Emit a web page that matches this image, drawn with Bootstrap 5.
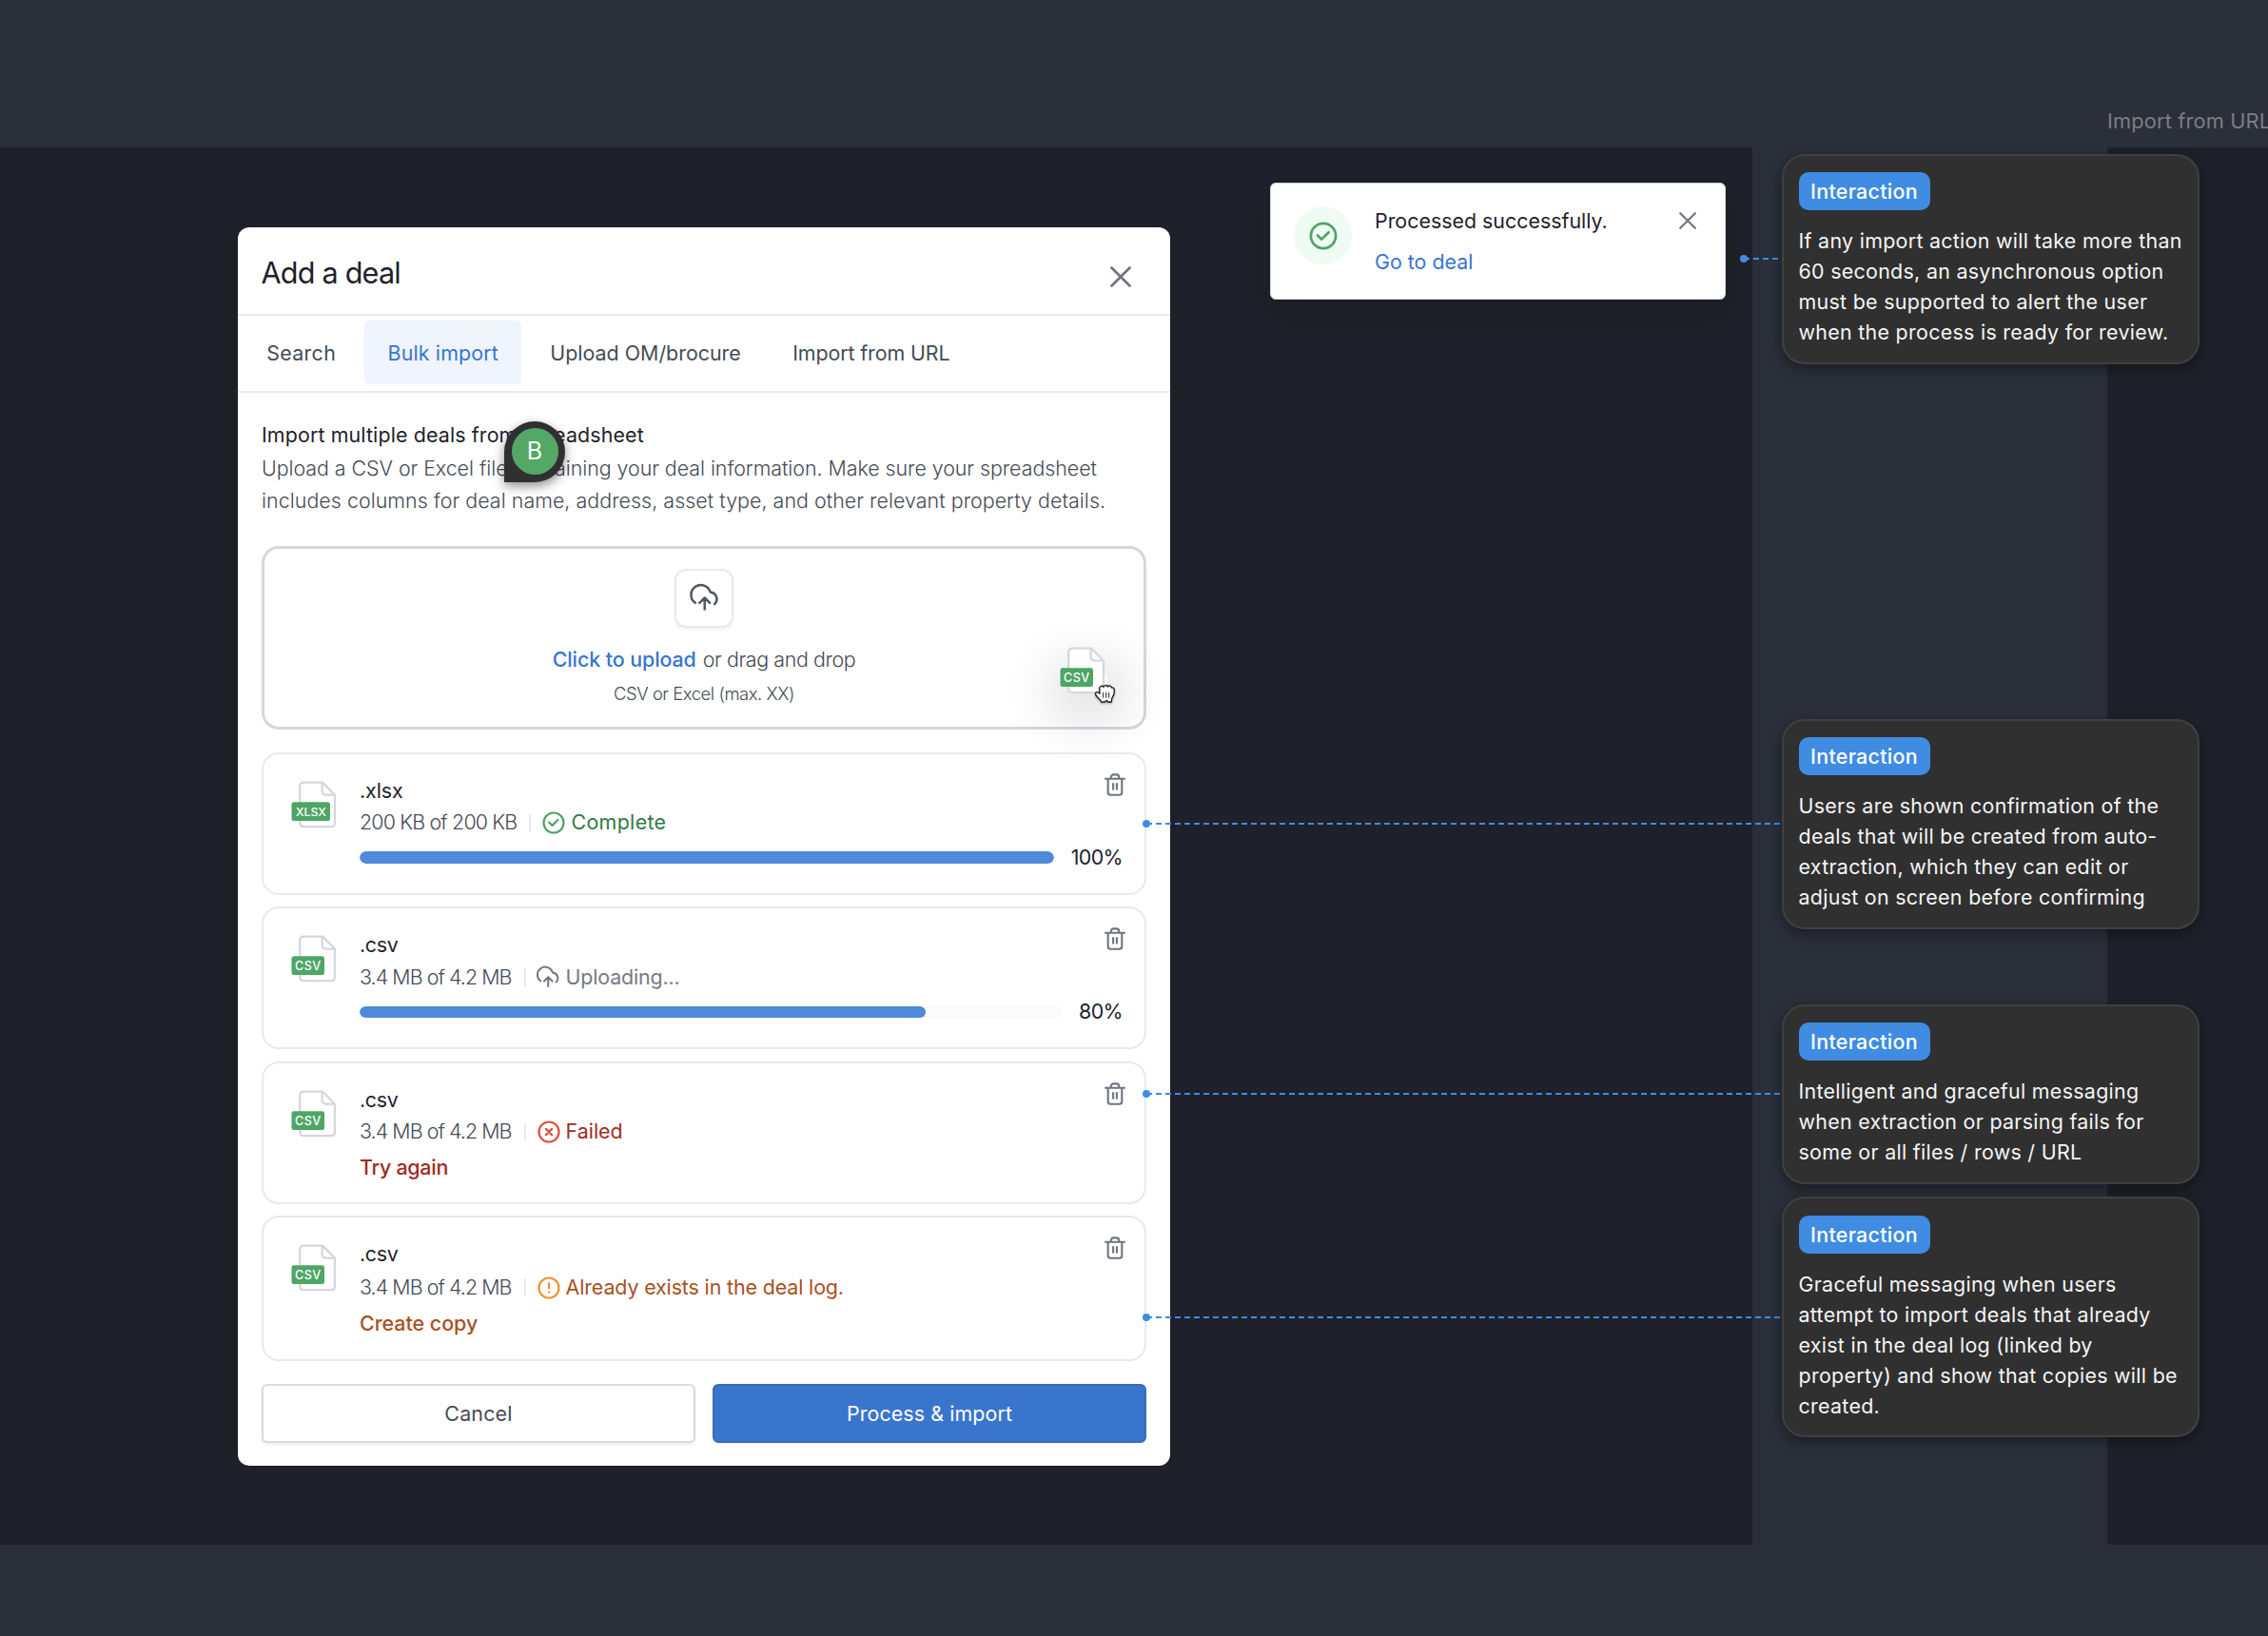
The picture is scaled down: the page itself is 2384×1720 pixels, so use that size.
<!DOCTYPE html>
<html lang="en">
<head>
<meta charset="utf-8">
<meta name="viewport" content="width=device-width, initial-scale=1">
<title>Add a deal</title>
<link href="https://cdn.jsdelivr.net/npm/bootstrap@5.3.0/dist/css/bootstrap.min.css" rel="stylesheet">
<style>
  :root { --ink:#1e222b; --slate:#464b56; --grey:#6f7580; --blue:#3875cf; --line:#e8e9ef; }
  body { background:#2b2f3a; font-family:Inter,"Liberation Sans",sans-serif; font-size:21.4px; line-height:33.6px; color:var(--ink); }
  a { text-decoration:none; }
  svg { display:block; flex:none; }
  .board { width:2384px; height:1720px; }
  .artboard { background:#1e2129; top:155px; height:1469px; }
  .artboard-a { left:0; width:1842px; }
  .artboard-b { left:2215px; width:169px; }
  .artboard-title { left:2215px; top:111px; font-size:21.8px; letter-spacing:.15px; color:#7b7e85; }

  .deal-modal { left:250px; top:239px; width:980px; height:1302px; border-radius:12px; }
  .modal-top { height:93px; padding:5px 41px 0 24.5px; border-bottom:2px solid var(--line); }
  .modal-top h1 { font-size:30.6px; font-weight:400; letter-spacing:-.8px; line-height:40px; }
  .tabs { height:81px; padding:5px 6px 0; gap:5.8px; border-bottom:2px solid #e9eaec; }
  .tabs .nav-link { height:67px; padding:0 24.3px; line-height:68.5px; color:var(--slate); border-radius:5px; }
  .tabs .nav-link.active { background:#eff4fd; color:var(--blue); }
  .modal-main { padding:28px 25px 0; }
  .intro { color:var(--slate); font-weight:350; }

  .dropzone { height:193px; margin-top:30.5px; border:3px solid #d5d7dc; border-radius:18px; padding-top:21px; }
  .upload-tile { width:62px; height:62px; border:2px solid var(--line); border-radius:12px; box-shadow:0 2px 3px rgba(30,34,43,.06); }
  .dragged { left:836px; top:103.5px; }
  .drag-shade { left:846px; top:128px; width:40px; height:20px; border-radius:20px; box-shadow:0 12px 54px 20px rgba(0,0,0,.14); }
  .grab { left:871.5px; top:142.5px; filter:drop-shadow(0 1px 1px rgba(0,0,0,.35)); }

  .file-list { margin-top:24px; gap:12.5px; }
  .file-card { height:150px; border:2px solid var(--line); border-radius:18px; padding:20px 23px 0 29px; }
  .file-card.tall { height:153px; }
  .file-body { padding:2px 0 0 24px; }
  .file-info { line-height:33.5px; }
  .size-text { color:var(--slate); font-weight:350; letter-spacing:-.92px; }
  .sep { width:2px; height:19px; background:var(--line); margin:0 12px 0 13px; }
  .track { height:12.5px; border-radius:7px; background:#fbfbfd; }
  .track .progress-bar { border-radius:7px; background:#4f89da; }
  .pct { letter-spacing:-.6px; margin-left:18px; }
  .file-action { font-weight:500; line-height:34px; }
  .trash { margin:-2px -4px 0 0; }
  .t-done { color:#2f7a46; }
  .t-fail { color:#9e2c22; }
  .t-warn { color:#a9501f; }

  .foot { margin-top:24px; gap:18px; }
  .foot .btn { height:62px; border-radius:6px; font-size:21.4px; border-width:2px; }
  .btn-cancel { border-color:#d9dadf; color:var(--slate); background:#fff; box-shadow:0 2px 3px rgba(30,34,43,.08); }
  .btn-process { background:#3a75cd; border-color:#386cba; color:#fff; }

  .toast-card { left:1335px; top:192px; width:479px; height:122.5px; border-radius:6px; border:1px solid #d0d3da; padding:24px 38px 0 24px; box-shadow:0 16px 30px rgba(0,0,0,.12); }
  .ok-disc { width:61px; height:61px; background:#effbf3; }

  .note { left:1873px; width:439px; background:#303030; border:2px solid #404040; border-radius:24px; padding:17.5px 12px 0 15.5px; color:#f5f5f5; letter-spacing:.3px; line-height:32px; box-shadow:0 5px 14px rgba(0,0,0,.4); }
  .note .tag { display:block; width:138px; height:40px; line-height:41px; text-align:center; background:#3f8ce2; color:#fff; font-weight:550; border-radius:10px; margin-bottom:16px; }
  .note p { margin:0; white-space:nowrap; }

  .link-line { height:2px; background:repeating-linear-gradient(90deg,#3f8ce2 0 6px,transparent 6px 10px); }
  .link-line::before { content:""; position:absolute; left:-4px; top:-3px; width:8px; height:8px; border-radius:50%; background:#3f8ce2; }

  .pin { left:530px; top:442.5px; width:64px; height:64px; background:#303030; border-radius:50% 50% 50% 0; box-shadow:0 4px 12px rgba(0,0,0,.45); }
  .pin span { width:49px; height:49px; background:#53a866; color:#fff; font-size:25px; }
</style>
</head>
<body>
<svg width="0" height="0" class="position-absolute">
  <defs>
    <symbol id="page" viewBox="0 0 48 50">
      <path d="M12.2 1.7H33.2L46 14.6V44.6a3.6 3.6 0 0 1-3.6 3.6H12.8a3.6 3.6 0 0 1-3.6-3.6V5.3a3.6 3.6 0 0 1 3.6-3.6Z" fill="#fff" stroke="#d5d7db" stroke-width="2.3"/>
      <path d="M32.6 1.9V11a3.6 3.6 0 0 0 3.6 3.6H46" fill="none" stroke="#d5d7db" stroke-width="2.3"/>
    </symbol>
    <symbol id="csv" viewBox="0 0 48 50">
      <use href="#page" width="48" height="50"/>
      <rect x=".5" y="22.2" width="34.5" height="19.8" rx="2.5" fill="#4ea566"/>
      <text x="17.9" y="36.9" text-anchor="middle" font-size="12.6" font-weight="550" letter-spacing=".5" fill="#fff">CSV</text>
    </symbol>
    <symbol id="xlsx" viewBox="0 0 48 50">
      <use href="#page" width="48" height="50"/>
      <rect x=".5" y="22.2" width="40.5" height="19.8" rx="2.5" fill="#4ea566"/>
      <text x="20.9" y="36.8" text-anchor="middle" font-size="12.2" font-weight="550" fill="#fff">XLSX</text>
    </symbol>
    <symbol id="cloud" viewBox="0 0 34 32">
      <path d="M6.8 20.8A10.3 10.3 0 1 1 22.6 9.4 7.5 7.5 0 0 1 27.2 22.2M16.7 27.6V15.6M11.3 20.8l5.4-5.3 5.4 5.3" fill="none" stroke="currentColor" stroke-width="2.5" stroke-linecap="round" stroke-linejoin="round"/>
    </symbol>
    <symbol id="check" viewBox="0 0 24 24">
      <circle cx="12" cy="12" r="10.5" fill="none" stroke="currentColor" stroke-width="2.2"/>
      <path d="M7.2 11.6l3.3 3.3 6-5.9" fill="none" stroke="currentColor" stroke-width="2.2" stroke-linecap="round" stroke-linejoin="round"/>
    </symbol>
    <symbol id="cross" viewBox="0 0 22 22">
      <path d="M1.5 1.5l19 19M20.5 1.5l-19 19" fill="none" stroke="currentColor" stroke-width="2.7" stroke-linecap="round"/>
    </symbol>
    <symbol id="bin" viewBox="0 0 24 24">
      <path d="M2 5.7h20M4.7 5.7V20a2.8 2.8 0 0 0 2.8 2.8h9A2.8 2.8 0 0 0 19.3 20V5.7M7.8 5.5V4a2.6 2.6 0 0 1 2.6-2.6h3.2A2.6 2.6 0 0 1 16.2 4v1.5M10.1 11v5.8M13.9 11v5.8" fill="none" stroke="currentColor" stroke-width="2.1" stroke-linecap="round" stroke-linejoin="round"/>
    </symbol>
  </defs>
</svg>

<main class="board position-relative overflow-hidden">
  <div class="artboard artboard-a position-absolute"></div>
  <div class="artboard artboard-b position-absolute"></div>
  <div class="artboard-title position-absolute text-nowrap">Import from URL</div>

  <section class="deal-modal position-absolute bg-white">
    <header class="modal-top d-flex align-items-center justify-content-between">
      <h1 class="m-0">Add a deal</h1>
      <svg width="22" height="22" class="mt-2" style="color:#6f7580"><use href="#cross"/></svg>
    </header>
    <nav class="tabs nav flex-nowrap">
      <a class="nav-link" href="#" style="letter-spacing:.3px">Search</a>
      <a class="nav-link active" href="#" style="letter-spacing:.15px">Bulk import</a>
      <a class="nav-link" href="#">Upload OM/brocure</a>
      <a class="nav-link" href="#" style="letter-spacing:-.1px">Import from URL</a>
    </nav>
    <div class="modal-main">
      <div style="letter-spacing:.13px">Import multiple deals from spreadsheet</div>
      <div class="intro text-nowrap">
        <div style="letter-spacing:-.04px; padding-top:1.5px">Upload a CSV or Excel file containing your deal information. Make sure your spreadsheet</div>
        <div style="letter-spacing:.05px">includes columns for deal name, address, asset type, and other relevant property details.</div>
      </div>

      <div class="dropzone position-relative d-flex flex-column align-items-center">
        <div class="upload-tile d-flex align-items-center justify-content-center bg-white">
          <svg width="34" height="32" style="color:#50555f; margin:1px 0 0 1px"><use href="#cloud"/></svg>
        </div>
        <div class="d-flex" style="margin-top:17px; gap:7px">
          <a href="#" style="color:var(--blue); font-weight:550; letter-spacing:-.07px">Click to upload</a>
          <span style="color:var(--slate); font-weight:350; letter-spacing:-.38px">or drag and drop</span>
        </div>
        <div style="color:var(--slate); font-weight:350; font-size:18.4px; letter-spacing:-.43px; margin-top:3px">CSV or Excel (max. XX)</div>
        <div class="drag-shade position-absolute"></div>
        <svg class="dragged position-absolute" width="48" height="50"><use href="#csv"/></svg>
        <svg class="grab position-absolute" width="22" height="20" viewBox="0 0 66 60">
          <path d="M22 55C18 46 8 42 5 34C3 27 9 24 14 28L18 31L17 14C18 6 27 5 30 10C33 3 41 3 43 9C47 4 54 6 55 12C60 11 65 14 64 22C64 34 61 40 56 46L55 57L44 57L40 52L34 57L23 57Z" fill="#fff" stroke="#222" stroke-width="4" stroke-linejoin="round"/>
          <path d="M29 27V44M38 27V44M47 27V44" stroke="#222" stroke-width="3"/>
        </svg>
      </div>

      <div class="file-list d-flex flex-column">
        <article class="file-card position-relative d-flex align-items-start">
          <svg width="48" height="50" class="mt-2"><use href="#xlsx"/></svg>
          <div class="file-body flex-grow-1">
            <div class="d-flex justify-content-between">
              <div class="file-info">
                <div style="letter-spacing:-.1px">.xlsx</div>
                <div class="d-flex align-items-center"><span class="size-text" style="letter-spacing:-.83px">200 KB of 200 KB</span><i class="sep"></i><svg width="24" height="24" style="color:#4ea566"><use href="#check"/></svg><span class="t-done" style="margin-left:6px; letter-spacing:.35px">Complete</span></div>
              </div>
              <svg class="trash" width="24" height="24" style="color:#6f7580"><use href="#bin"/></svg>
            </div>
            <div class="d-flex align-items-center" style="margin-top:3px">
              <div class="progress track flex-grow-1"><div class="progress-bar" style="width:100%"></div></div>
              <span class="pct">100%</span>
            </div>
          </div>
        </article>

        <article class="file-card position-relative d-flex align-items-start">
          <svg width="48" height="50" class="mt-2"><use href="#csv"/></svg>
          <div class="file-body flex-grow-1">
            <div class="d-flex justify-content-between">
              <div class="file-info">
                <div style="letter-spacing:-.3px">.csv</div>
                <div class="d-flex align-items-center"><span class="size-text">3.4 MB of 4.2 MB</span><i class="sep"></i><svg width="27" height="25.4" style="color:#6f7580; margin-left:-2px"><use href="#cloud"/></svg><span style="margin-left:5px; color:#747a85; letter-spacing:-.15px">Uploading...</span></div>
              </div>
              <svg class="trash" width="24" height="24" style="color:#6f7580"><use href="#bin"/></svg>
            </div>
            <div class="d-flex align-items-center" style="margin-top:3px">
              <div class="progress track flex-grow-1"><div class="progress-bar" style="width:80.6%"></div></div>
              <span class="pct">80%</span>
            </div>
          </div>
        </article>

        <article class="file-card position-relative d-flex align-items-start">
          <svg width="48" height="50" class="mt-2"><use href="#csv"/></svg>
          <div class="file-body flex-grow-1">
            <div class="d-flex justify-content-between">
              <div class="file-info">
                <div style="letter-spacing:-.3px">.csv</div>
                <div class="d-flex align-items-center"><span class="size-text">3.4 MB of 4.2 MB</span><i class="sep"></i><svg width="24" height="24" viewBox="0 0 24 24" fill="none" stroke="#dd5142" stroke-width="2.2" stroke-linecap="round"><circle cx="12" cy="12" r="10.5"/><path d="M8.9 8.9l6.2 6.2M15.1 8.9l-6.2 6.2"/></svg><span class="t-fail" style="margin-left:6px">Failed</span></div>
              </div>
              <svg class="trash" width="24" height="24" style="color:#6f7580"><use href="#bin"/></svg>
            </div>
            <a href="#" class="file-action t-fail d-block" style="margin-top:3px; letter-spacing:-.24px">Try again</a>
          </div>
        </article>

        <article class="file-card tall position-relative d-flex align-items-start">
          <svg width="48" height="50" class="mt-2"><use href="#csv"/></svg>
          <div class="file-body flex-grow-1">
            <div class="d-flex justify-content-between">
              <div class="file-info">
                <div style="letter-spacing:-.3px">.csv</div>
                <div class="d-flex align-items-center" style="margin-top:1px"><span class="size-text">3.4 MB of 4.2 MB</span><i class="sep"></i><svg width="24" height="24" viewBox="0 0 24 24" fill="none" stroke="#ee9330" stroke-width="2.2" stroke-linecap="round"><circle cx="12" cy="12" r="10.5"/><path d="M12 7v5.4M12 16.6v.1"/></svg><span class="t-warn" style="margin-left:6px; letter-spacing:-.12px">Already exists in the deal log.</span></div>
              </div>
              <svg class="trash" width="24" height="24" style="color:#6f7580"><use href="#bin"/></svg>
            </div>
            <a href="#" class="file-action t-warn d-block" style="margin-top:4px">Create copy</a>
          </div>
        </article>
      </div>

      <footer class="foot d-flex">
        <button class="btn btn-cancel flex-fill w-50 py-0" style="letter-spacing:.2px">Cancel</button>
        <button class="btn btn-process flex-fill w-50 py-0" style="letter-spacing:.1px">Process &amp; import</button>
      </footer>
    </div>
  </section>

  <aside class="toast-card position-absolute bg-white d-flex align-items-start">
    <div class="ok-disc rounded-circle d-flex align-items-center justify-content-center">
      <svg width="30" height="30" style="color:#4ea566"><use href="#check"/></svg>
    </div>
    <div style="margin:-1.5px auto 0 24px">
      <div>Processed successfully.</div>
      <a href="#" class="d-block" style="margin-top:9.5px; color:var(--blue)">Go to deal</a>
    </div>
    <svg width="18" height="18" style="color:#6f7580; margin:6px -8px 0 0"><use href="#cross"/></svg>
  </aside>

  <div class="link-line position-absolute" style="left:1833px; top:271px; width:40px"></div>
  <div class="link-line position-absolute" style="left:1205px; top:865px; width:668px"></div>
  <div class="link-line position-absolute" style="left:1205px; top:1149px; width:668px"></div>
  <div class="link-line position-absolute" style="left:1205px; top:1384px; width:668px"></div>

  <article class="note position-absolute" style="top:161.5px; height:221px">
    <span class="tag">Interaction</span>
    <p>If any import action will take more than<br>60 seconds, an asynchronous option<br>must be supported to alert the user<br>when the process is ready for review.</p>
  </article>
  <article class="note position-absolute" style="top:755.5px; height:221px">
    <span class="tag">Interaction</span>
    <p>Users are shown confirmation of the<br>deals that will be created from auto-<br>extraction, which they can edit or<br>adjust on screen before confirming</p>
  </article>
  <article class="note position-absolute" style="top:1055.5px; height:189.5px">
    <span class="tag">Interaction</span>
    <p>Intelligent and graceful messaging<br>when extraction or parsing fails for<br>some or all files / rows / URL</p>
  </article>
  <article class="note position-absolute" style="top:1258px; height:253px">
    <span class="tag">Interaction</span>
    <p>Graceful messaging when users<br>attempt to import deals that already<br>exist in the deal log (linked by<br>property) and show that copies will be<br>created.</p>
  </article>

  <div class="pin position-absolute d-flex align-items-center justify-content-center">
    <span class="rounded-circle d-flex align-items-center justify-content-center">B</span>
  </div>
</main>
<script src="https://cdn.jsdelivr.net/npm/bootstrap@5.3.0/dist/js/bootstrap.bundle.min.js"></script>
</body>
</html>
